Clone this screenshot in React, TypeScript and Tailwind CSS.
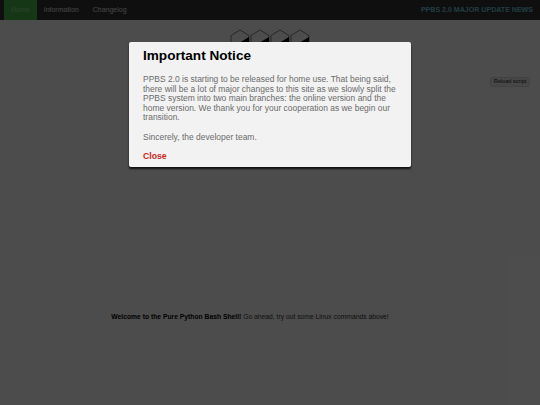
import React from 'react';

function Hexagon() {
  return (
    <svg width="20" height="24" viewBox="0 0 20 24">
      <path d="M10 1 L19 6.5 L19 23 L1 23 L1 6.5 Z" fill="none" stroke="#666" strokeWidth="0.8" />
      <path d="M19 8 L19 23 L9 23 L9 14 Z" fill="#000" />
    </svg>
  );
}

function NavLink({ label, active }: { label: string; active?: boolean }) {
  return (
    <a className={`flex items-center px-[7px] ${active ? 'bg-[#46b946] text-[#9be09b]' : 'text-[#e0e0e0]'}`}>
      {label}
    </a>
  );
}

export default function App() {
  return (
    <div className="relative h-[405px] w-[540px] overflow-hidden bg-white font-['Liberation_Sans',Arial,sans-serif]">
      <nav className="flex h-5 items-stretch justify-between bg-[#353535] pl-1 pr-[7px] text-[7px]">
        <div className="flex items-stretch">
          <NavLink label="Home" active />
          <NavLink label="Information" />
          <NavLink label="Changelog" />
        </div>
        <span className="self-center text-[7.07px] font-bold text-[#70c8d8]">PPBS 2.0 MAJOR UPDATE NEWS</span>
      </nav>

      <div className="flex justify-center pt-[9px]">
        <div className="flex">
          <Hexagon />
          <Hexagon />
          <Hexagon />
          <Hexagon />
        </div>
      </div>

      <div className="flex justify-end pr-[10px] pt-[24px]">
        <button className="h-[10px] w-[40px] rounded-[2px] border border-[#dddddd] bg-[#efefef] text-[5.6px] leading-none text-[#222]">
          Reload script
        </button>
      </div>

      <p className="mt-[225px] w-[500px] text-center text-[6.76px] text-[#333]">
        <b className="text-black">Welcome to the Pure Python Bash Shell!</b> Go ahead, try out some Linux commands above!
      </p>

      <div className="absolute inset-0 bg-black/70" />

      <div className="absolute left-[129px] top-[42px] h-[125px] w-[282px] rounded-[2px] bg-[#f2f2f2] px-[14px] pt-[6px] shadow-[0_2px_2px_0_rgba(0,0,0,0.8)]">
        <h2 className="text-[13.6px] font-bold leading-4 text-black">Important Notice</h2>
        <div className="mt-[11px] text-[8.47px] leading-[9.6px] text-[#6b6b6b]">
          <p>
            PPBS 2.0 is starting to be released for home use. That being said, there will be a lot of major changes to
            this site as we slowly split the PPBS system into two main branches: the online version and the home
            version. We thank you for your cooperation as we begin our transition.
          </p>
          <p className="mt-[9.6px]">Sincerely, the developer team.</p>
        </div>
        <a className="mt-[9px] block text-[8.7px] font-bold leading-[10px] text-[#c9281a]">Close</a>
      </div>
    </div>
  );
}
